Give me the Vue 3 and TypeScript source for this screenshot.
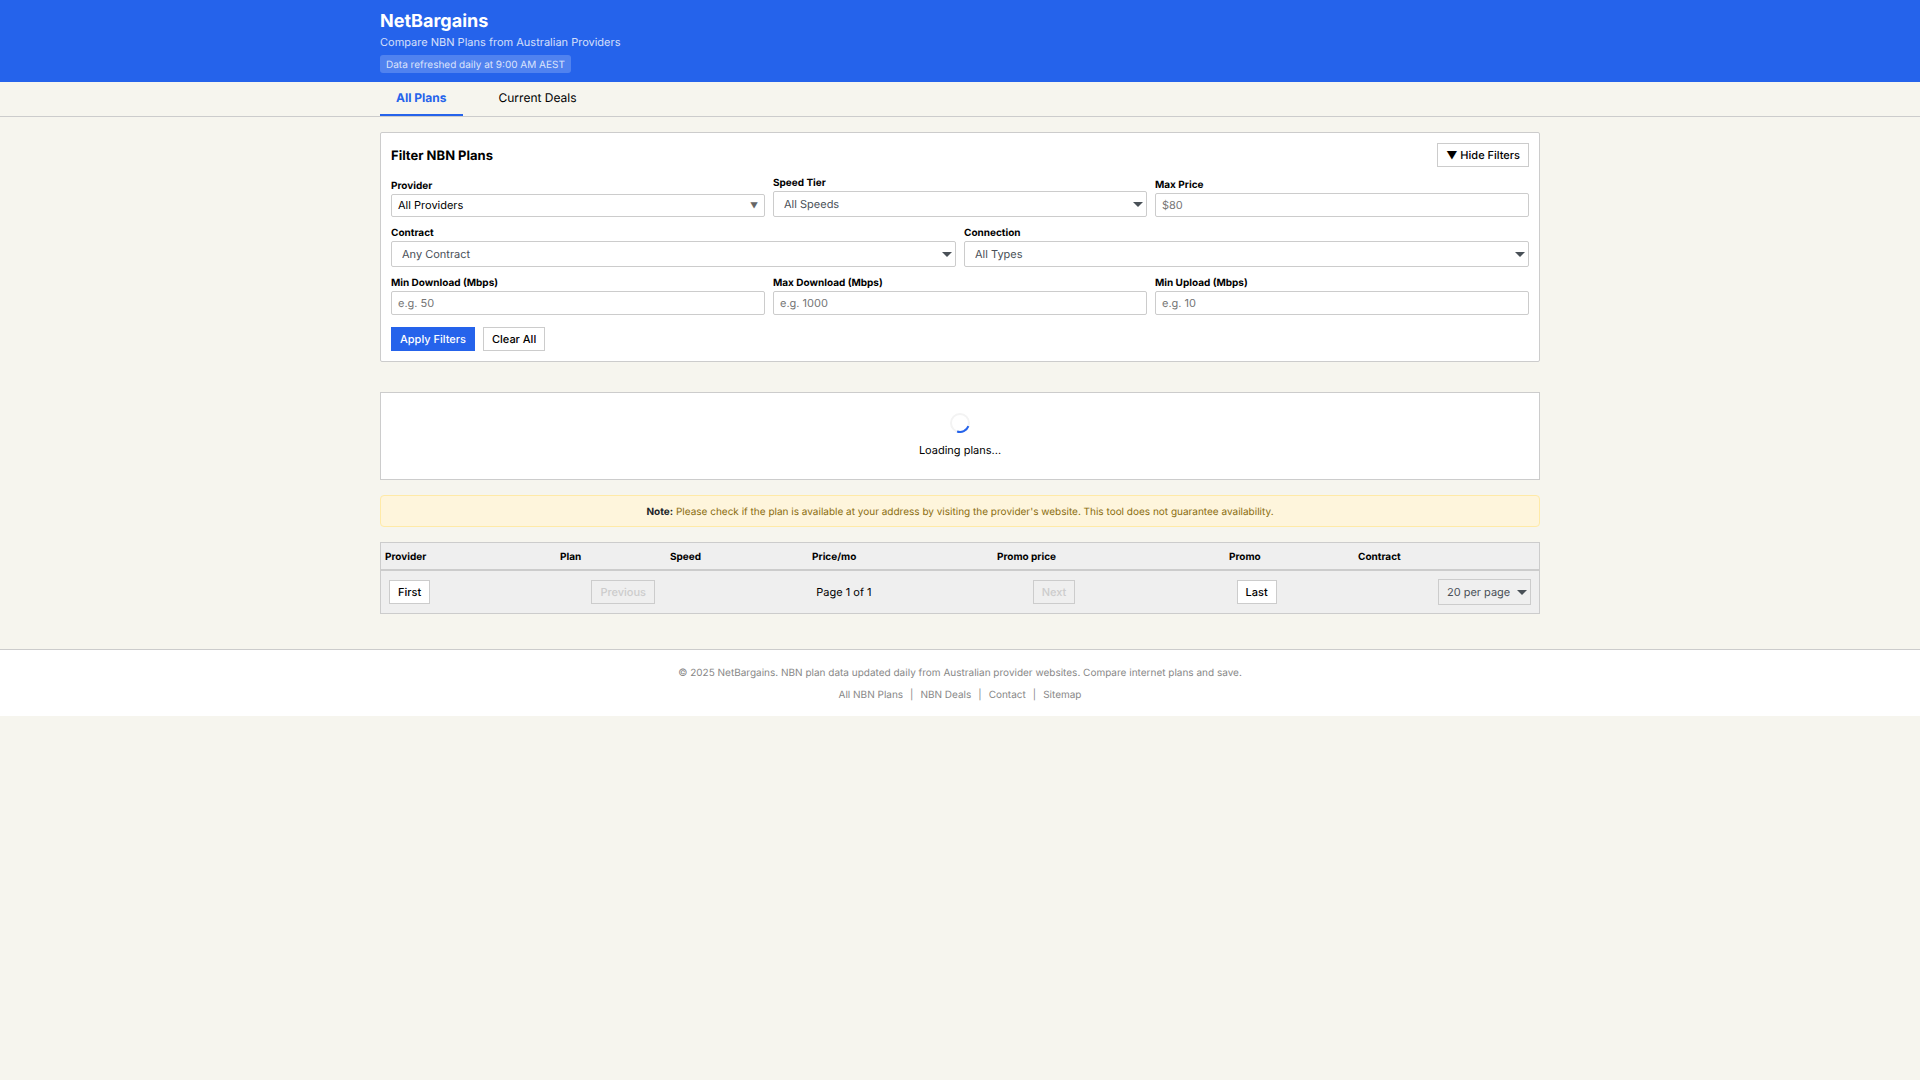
<script setup lang="ts">
import { ref } from 'vue'

interface Column {
  label: string
  width: number
}

const columns: Column[] = [
  { label: 'Provider', width: 175 },
  { label: 'Plan', width: 110 },
  { label: 'Speed', width: 142 },
  { label: 'Price/mo', width: 185 },
  { label: 'Promo price', width: 232 },
  { label: 'Promo', width: 129 },
  { label: 'Contract', width: 185 },
]

const footerLinks: string[] = ['All NBN Plans', 'NBN Deals', 'Contact', 'Sitemap']

const showFilters = ref(true)
const speed = ref('')
const maxPrice = ref('')
const contract = ref('')
const connection = ref('')
const minDownload = ref('')
const maxDownload = ref('')
const minUpload = ref('')

function clearAll(): void {
  for (const field of [speed, maxPrice, contract, connection, minDownload, maxDownload, minUpload]) {
    field.value = ''
  }
}
</script>

<template>
  <header class="site-header">
    <div class="container">
      <h1>NetBargains</h1>
      <p class="tagline">Compare NBN Plans from Australian Providers</p>
      <span class="refresh">Data refreshed daily at 9:00 AM AEST</span>
    </div>
  </header>

  <nav class="tabs">
    <div class="container tab-list">
      <a href="#plans" class="tab active">All Plans</a>
      <a href="#deals" class="tab">Current Deals</a>
    </div>
  </nav>

  <main class="main">
    <div class="container">
      <form class="filters" @submit.prevent>
        <div class="filters-head">
          <h2>Filter NBN Plans</h2>
          <button type="button" class="btn" @click="showFilters = !showFilters">
            {{ showFilters ? '▼ Hide Filters' : '▶ Show Filters' }}
          </button>
        </div>
        <template v-if="showFilters">
          <div class="row">
            <div class="field">
              <label for="provider">Provider</label>
              <button id="provider" type="button" class="provider-button">
                <span>All Providers</span><span class="provider-arrow">▼</span>
              </button>
            </div>
            <div class="field">
              <label for="speed">Speed Tier</label>
              <div class="select-wrap">
                <select id="speed" v-model="speed"><option value="">All Speeds</option></select>
                <svg class="caret" viewBox="0 0 10 5"><path d="M0 0H10L5 5Z" /></svg>
              </div>
            </div>
            <div class="field">
              <label for="max-price">Max Price</label>
              <input id="max-price" v-model="maxPrice" type="text" placeholder="$80" />
            </div>
          </div>
          <div class="row">
            <div class="field">
              <label for="contract">Contract</label>
              <div class="select-wrap">
                <select id="contract" v-model="contract"><option value="">Any Contract</option></select>
                <svg class="caret" viewBox="0 0 10 5"><path d="M0 0H10L5 5Z" /></svg>
              </div>
            </div>
            <div class="field">
              <label for="connection">Connection</label>
              <div class="select-wrap">
                <select id="connection" v-model="connection"><option value="">All Types</option></select>
                <svg class="caret" viewBox="0 0 10 5"><path d="M0 0H10L5 5Z" /></svg>
              </div>
            </div>
          </div>
          <div class="row">
            <div class="field">
              <label for="min-download">Min Download (Mbps)</label>
              <input id="min-download" v-model="minDownload" type="text" placeholder="e.g. 50" />
            </div>
            <div class="field">
              <label for="max-download">Max Download (Mbps)</label>
              <input id="max-download" v-model="maxDownload" type="text" placeholder="e.g. 1000" />
            </div>
            <div class="field">
              <label for="min-upload">Min Upload (Mbps)</label>
              <input id="min-upload" v-model="minUpload" type="text" placeholder="e.g. 10" />
            </div>
          </div>
          <div class="actions">
            <button type="submit" class="btn primary">Apply Filters</button>
            <button type="button" class="btn" @click="clearAll">Clear All</button>
          </div>
        </template>
      </form>

      <section class="loading">
        <svg class="spinner" viewBox="0 0 20 20">
          <circle cx="10" cy="10" r="9" fill="none" stroke="#f3f3f3" stroke-width="2" />
          <path d="M18.4 13.2A9 9 0 0 1 7.1 18.5" fill="none" stroke="#2563eb" stroke-width="2" />
        </svg>
        <p>Loading plans...</p>
      </section>

      <p class="note">
        <strong>Note:</strong> Please check if the plan is available at your address by visiting the provider's website. This tool does not guarantee availability.
      </p>

      <section class="results">
        <table>
          <colgroup>
            <col v-for="c in columns" :key="c.label" :style="{ width: c.width + 'px' }" />
          </colgroup>
          <thead>
            <tr>
              <th v-for="c in columns" :key="c.label" scope="col">{{ c.label }}</th>
            </tr>
          </thead>
        </table>
        <div class="pager">
          <button type="button" class="btn">First</button>
          <button type="button" class="btn" disabled>Previous</button>
          <span class="page-info">Page 1 of 1</span>
          <button type="button" class="btn" disabled>Next</button>
          <button type="button" class="btn">Last</button>
          <div class="select-wrap per-page">
            <select aria-label="Plans per page"><option>20 per page</option></select>
            <svg class="caret" viewBox="0 0 10 5"><path d="M0 0H10L5 5Z" /></svg>
          </div>
        </div>
      </section>
    </div>
  </main>

  <footer class="site-footer">
    <p>© 2025 NetBargains. NBN plan data updated daily from Australian provider websites. Compare internet plans and save.</p>
    <div class="footer-links">
      <template v-for="(link, i) in footerLinks" :key="link">
        <span v-if="i > 0">|</span>
        <a href="#">{{ link }}</a>
      </template>
    </div>
  </footer>
</template>

<style>
body {
  margin: 0;
  background: #f6f5ee;
  color: #000;
  font-family: Inter, "Liberation Sans", sans-serif;
  font-size: 11px;
  line-height: 16px;
  text-rendering: geometricPrecision;
}
</style>

<style scoped>
* {
  box-sizing: border-box;
}

h1,
h2,
p {
  margin: 0;
}

button,
input,
select {
  margin: 0;
  font: inherit;
  text-rendering: inherit;
}

a {
  color: inherit;
  text-decoration: none;
}

.container {
  max-width: 1160px;
  margin: 0 auto;
}

.site-header {
  padding: 10px 20px 9px;
  background: #2563eb;
  color: #fff;
}

h1 {
  font-size: 18px;
  line-height: 24px;
  font-weight: 700;
}

.tagline {
  margin-bottom: 5px;
  opacity: 0.8;
}

.refresh {
  display: block;
  width: fit-content;
  padding: 3px 6px 1px;
  border-radius: 3px;
  background: rgba(255, 255, 255, 0.2);
  color: rgba(255, 255, 255, 0.8);
  font-size: 10px;
  line-height: 14px;
}

.tabs {
  padding: 0 20px;
  border-bottom: 1px solid #ccc;
}

.tab-list {
  display: flex;
  gap: 20px;
}

.tab {
  padding: 8px 16px;
  border-bottom: 2px solid transparent;
  font-size: 12px;
}

.tab.active {
  border-color: #2563eb;
  color: #2563eb;
  font-weight: 700;
}

.main {
  padding: 15px 20px 0;
}

.filters {
  display: flex;
  flex-direction: column;
  gap: 8px;
  padding: 10px;
  border: 1px solid #ccc;
  border-radius: 2px;
  background: #fff;
}

.filters-head {
  display: flex;
  align-items: center;
  justify-content: space-between;
}

h2 {
  padding-top: 2px;
  font-size: 13px;
  font-weight: 700;
}

.btn {
  height: 24px;
  padding: 0 8px;
  border: 1px solid #ccc;
  background: #fff;
  color: #000;
  font-weight: 500;
  white-space: nowrap;
}

.btn.primary {
  border-color: #2563eb;
  background: #2563eb;
  color: #fff;
}

.btn:disabled {
  background: transparent;
  color: #ccc;
}

.row {
  display: flex;
  align-items: flex-end;
  gap: 8px;
}

.field {
  flex: 1 1 0;
  min-width: 0;
}

label {
  display: block;
  font-size: 10px;
  line-height: 16px;
  font-weight: 700;
}

input,
.provider-button,
select {
  display: block;
  width: 100%;
  border: 1px solid #ccc;
  border-radius: 2px;
  background: #fff;
  color: #000;
}

input {
  height: 24px;
  padding: 0 6px;
}

input::placeholder {
  color: #757575;
}

.provider-button {
  display: flex;
  align-items: center;
  justify-content: space-between;
  height: 23px;
  padding: 0 6px 1px;
}

.provider-arrow {
  color: #666;
  font-size: 8px;
}

.select-wrap {
  position: relative;
}

select {
  height: 26px;
  padding: 0 20px 0 10px;
  appearance: none;
  color: #495057;
}

.caret {
  position: absolute;
  top: 11px;
  right: 4px;
  width: 10px;
  height: 5px;
  fill: #495057;
  pointer-events: none;
}

.actions {
  display: flex;
  gap: 8px;
  margin-top: 4px;
}

.loading {
  display: flex;
  flex-direction: column;
  align-items: center;
  gap: 8px;
  margin-top: 30px;
  padding: 20px;
  border: 1px solid #ccc;
  background: #fff;
  line-height: 18px;
}

.spinner {
  width: 20px;
  height: 20px;
}

.note {
  margin: 15px 0;
  padding: 9px 8px 7px;
  border: 1px solid #ffeaa7;
  border-radius: 4px;
  background: #fef5dc;
  color: #8a6d0f;
  font-size: 10px;
  line-height: 14px;
  text-align: center;
}

.note strong {
  color: #212529;
}

.results {
  border: 1px solid #ccc;
  background: #efefef;
}

table {
  width: 100%;
  table-layout: fixed;
  border-collapse: separate;
  border-spacing: 0;
}

th {
  padding: 6px 4px 4px;
  border-bottom: 2px solid #ccc;
  font-size: 10px;
  font-weight: 700;
  text-align: left;
}

.pager {
  display: flex;
  align-items: center;
  justify-content: space-between;
  padding: 8px;
}

.per-page select {
  width: 93px;
  padding-left: 8px;
  border-radius: 0;
  background: transparent;
}

.site-footer {
  margin-top: 35px;
  padding: 16px 20px 14px;
  border-top: 1px solid #ccc;
  background: #fff;
  color: #888;
  font-size: 10px;
  line-height: 14px;
  text-align: center;
}

.footer-links {
  display: flex;
  justify-content: center;
  gap: 7px;
  margin-top: 8px;
}
</style>
